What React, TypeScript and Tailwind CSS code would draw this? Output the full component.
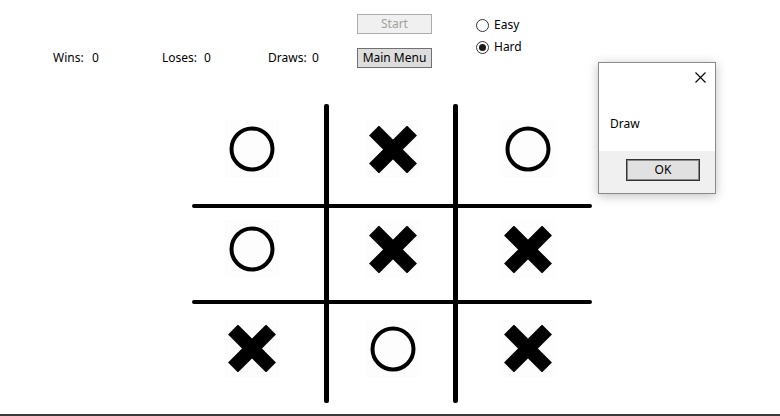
import React from "react";

const font = { fontFamily: '"Segoe UI", "Noto Sans", "Open Sans", sans-serif' };

function O() {
  return (
    <svg width="48" height="48" viewBox="0 0 48 48">
      <circle cx="24" cy="24" r="20.5" fill="none" stroke="#000" strokeWidth="4" />
    </svg>
  );
}

function X() {
  return (
    <svg width="48" height="47" viewBox="0 0 48 47">
      <path d="M5 4.5 L43 42.5 M43 4.5 L5 42.5" stroke="#000" strokeWidth="14" strokeLinecap="butt" />
    </svg>
  );
}

function Cell({ mark, shift, row, col }: { mark: "O" | "X"; shift: string; row: string; col: string }) {
  return (
    <div className={`${row} ${col} flex items-center justify-center pb-[10px] ${shift}`}>
      <div className="w-[54px] h-[58px] bg-[#fdfdfd] flex items-center justify-center">
        {mark === "O" ? <O /> : <X />}
      </div>
    </div>
  );
}

export default function App() {
  return (
    <div className="relative w-[780px] h-[416px] bg-white flex flex-col text-[12px] text-black overflow-hidden" style={font}>
      {/* top area */}
      <div className="h-[104px] flex items-start pl-[53px] pt-[14px]">
        <div className="mt-[35px] flex items-center h-[18px]">
          <span className="w-[39px]">Wins:</span>
          <span className="w-[70px]">0</span>
          <span className="w-[42px]">Loses:</span>
          <span className="w-[64px]">0</span>
          <span className="w-[44px]">Draws:</span>
          <span className="w-[45px]">0</span>
        </div>
        <div className="flex flex-col gap-[14px] w-[75px]">
          <div className="h-[20px] border border-[#adadad] bg-[#f0f0f0] text-[#a0a0a0] flex items-center justify-center leading-none">
            Start
          </div>
          <div className="h-[20px] border border-[#707070] bg-[#dddddd] flex items-center justify-center leading-none">
            Main Menu
          </div>
        </div>
        <div className="ml-[44px] mt-[4px] flex flex-col gap-[8px]">
          <div className="flex items-center gap-[5px] h-[14px]">
            <span className="w-[13px] h-[13px] rounded-full border border-[#333] bg-white" />
            <span>Easy</span>
          </div>
          <div className="flex items-center gap-[5px] h-[14px]">
            <span className="w-[13px] h-[13px] rounded-full border border-[#333] bg-white flex items-center justify-center">
              <span className="w-[7px] h-[7px] rounded-full bg-[#1a1a1a]" />
            </span>
            <span>Hard</span>
          </div>
        </div>
      </div>

      {/* board */}
      <div className="ml-[192px] grid grid-cols-[132px_5px_124px_5px_134px] grid-rows-[100px_4px_92px_4px_99px] w-[400px]">
        <div className="row-start-1 row-span-5 col-start-2 bg-black rounded-[2px]" />
        <div className="row-start-1 row-span-5 col-start-4 bg-black rounded-[2px]" />
        <div className="row-start-2 col-start-1 col-span-5 bg-black rounded-[2px]" />
        <div className="row-start-4 col-start-1 col-span-5 bg-black rounded-[2px]" />

        <Cell mark="O" row="row-start-1" col="col-start-1" shift="pr-[13px]" />
        <Cell mark="X" row="row-start-1" col="col-start-3" shift="pl-[4px]" />
        <Cell mark="O" row="row-start-1" col="col-start-5" shift="pl-[5px]" />

        <Cell mark="O" row="row-start-3" col="col-start-1" shift="pr-[13px]" />
        <Cell mark="X" row="row-start-3" col="col-start-3" shift="pl-[4px]" />
        <Cell mark="X" row="row-start-3" col="col-start-5" shift="pl-[5px]" />

        <Cell mark="X" row="row-start-5" col="col-start-1" shift="pr-[13px]" />
        <Cell mark="O" row="row-start-5" col="col-start-3" shift="pl-[4px]" />
        <Cell mark="X" row="row-start-5" col="col-start-5" shift="pl-[5px]" />
      </div>

      <div className="mt-auto h-[2px] bg-[#3a3a3a]" />

      {/* message dialog */}
      <div className="absolute left-[598px] top-[62px] w-[118px] h-[132px] border border-[#8a8a8a] bg-white flex flex-col shadow-[0_2px_10px_rgba(0,0,0,0.25)]">
        <div className="flex-1 relative">
          <svg className="absolute left-[96px] top-[9px]" width="11" height="11" viewBox="0 0 11 11">
            <path d="M0.5 0.5 L10.5 10.5 M10.5 0.5 L0.5 10.5" stroke="#000" strokeWidth="1.1" />
          </svg>
          <span className="absolute left-[11px] top-[52px]">Draw</span>
        </div>
        <div className="h-[42px] bg-[#f0f0f0] flex items-start pt-[8px] pl-[27px]">
          <div className="w-[74px] h-[22px] border border-[#333] bg-[#e1e1e1] shadow-[inset_0_0_0_1px_#8a8a8a] flex items-center justify-center leading-none">
            OK
          </div>
        </div>
      </div>
    </div>
  );
}
